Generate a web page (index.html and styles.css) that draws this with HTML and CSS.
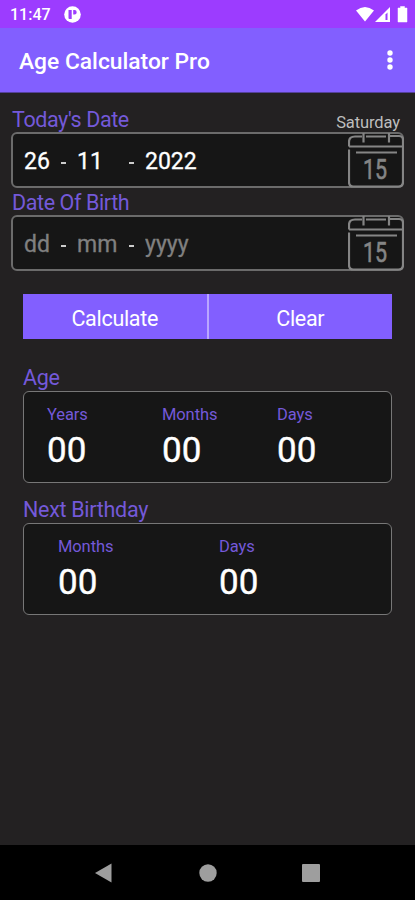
FILE: index.html
```html
<!DOCTYPE html>
<html lang="en">
<head>
  <meta charset="UTF-8">
  <meta name="viewport" content="width=device-width, initial-scale=1.0">
  <title>Age Calculator Pro</title>
  <link rel="stylesheet" href="styles.css">
</head>
<body>
  <!-- Calendar icon, used by both date fields -->
  <svg class="sprite">
    <symbol id="calendar" viewBox="0 0 56 56">
      <path d="M1 17.500v32.500q0 4.500 4.500 4.500h45q4.500 0 4.500-4.500V8q0-4-4-4h-9M1 14.500h54M1 14.500V10q0-5.500 6-5.500h7M18 4.500h20M15.500 1v9.500M41 1v9.500M8 20.500h41" fill="none" stroke="#858585" stroke-width="2.200"/>
      <text x="15" y="47" font-family="Roboto, sans-serif" font-size="27" textLength="24" lengthAdjust="spacingAndGlyphs" fill="#858585" stroke="#858585" stroke-width=".6">15</text>
    </symbol>
  </svg>

  <div class="status-bar">
    <span class="time">11:47</span>
    <svg class="app-icon" width="17" height="17" viewBox="0 0 17 17">
      <circle cx="8.500" cy="8.500" r="8.300" fill="#fff"/>
      <path d="M4.500 4h3.200v9H5.500q-1 0-1-1zM9.200 4h1.300a2.200 2.200 0 0 1 0 4.400H9.200z" fill="#9c3cff"/>
    </svg>
    <svg class="status-icons" width="52" height="17" viewBox="0 0 52 17">
      <path d="M0 4.500Q9 -2.500 18 4.500L9 15.500z" fill="#fff"/>
      <path d="M19 16L34 1v15z" fill="#fff"/>
      <path d="M29.500 8.500l2-2v7.500h-2z" fill="#9c3cff"/>
      <path d="M42 2h2.500V.5h4V2H51v14H42z" fill="#fff" stroke="#fff" stroke-width=".5" stroke-linejoin="round"/>
    </svg>
  </div>

  <header class="app-bar">
    <h1>Age Calculator Pro</h1>
    <button type="button" class="menu-button" aria-label="Menu">
      <svg width="6" height="20" viewBox="0 0 6 20" fill="#fff">
        <circle cx="3" cy="3" r="2.700"/>
        <circle cx="3" cy="10" r="2.700"/>
        <circle cx="3" cy="17" r="2.700"/>
      </svg>
    </button>
  </header>

  <main>
    <form id="ageForm">
      <div class="label-row">
        <label for="todayDay">Today's Date</label>
        <span class="weekday">Saturday</span>
      </div>
      <div class="date-field">
        <input type="text" class="day" id="todayDay" value="26">
        <span class="dash"></span>
        <input type="text" class="month" value="11">
        <span class="dash"></span>
        <input type="text" class="year" value="2022">
        <svg class="calendar"><use href="#calendar"/></svg>
      </div>

      <div class="label-row">
        <label for="birthDay">Date Of Birth</label>
      </div>
      <div class="date-field">
        <input type="text" class="day" id="birthDay" placeholder="dd">
        <span class="dash"></span>
        <input type="text" class="month" placeholder="mm">
        <span class="dash"></span>
        <input type="text" class="year" placeholder="yyyy">
        <svg class="calendar"><use href="#calendar"/></svg>
      </div>

      <div class="buttons">
        <button type="button">Calculate</button>
        <button type="reset">Clear</button>
      </div>
    </form>

    <section class="result">
      <h2>Age</h2>
      <div class="result-box age">
        <div><span class="unit">Years</span><span class="number">00</span></div>
        <div><span class="unit">Months</span><span class="number">00</span></div>
        <div><span class="unit">Days</span><span class="number">00</span></div>
      </div>
    </section>

    <section class="result">
      <h2>Next Birthday</h2>
      <div class="result-box birthday">
        <div><span class="unit">Months</span><span class="number">00</span></div>
        <div><span class="unit">Days</span><span class="number">00</span></div>
      </div>
    </section>
  </main>

  <nav class="nav-bar">
    <svg width="20" height="20" viewBox="0 0 20 20"><path d="M1 10L17.500 .5v19z"/></svg>
    <svg width="20" height="20" viewBox="0 0 20 20"><circle cx="10" cy="10" r="8.700"/></svg>
    <svg width="20" height="20" viewBox="0 0 20 20"><rect x="1" y="1" width="18" height="18" rx="1"/></svg>
  </nav>
</body>
</html>
```

FILE: styles.css
```css
* {
  box-sizing: border-box;
}

body {
  margin: 0;
  height: 900px;
  display: flex;
  flex-direction: column;
  overflow: hidden;
  font-family: Roboto, sans-serif;
  background-color: #232122;
  color: #fff;
}

.sprite {
  display: none;
}

.status-bar {
  height: 28px;
  padding: 0 8px 0 10px;
  display: flex;
  align-items: center;
  background-color: #9c3cff;
}

.time {
  font-size: 16px;
  font-weight: 500;
  line-height: 28px;
  padding-top: 2px;
}

.app-icon {
  margin-left: 13px;
}

.status-icons {
  margin-left: auto;
  margin-right: -1px;
}

.app-bar {
  height: 65px;
  padding: 0 20px;
  display: flex;
  align-items: center;
  justify-content: space-between;
  background-color: #825fff;
  border-bottom: 1px solid #54419a;
}

.app-bar h1 {
  margin: 2px 0 0 -1px;
  font-size: 22.8px;
  font-weight: 500;
}

.menu-button {
  display: flex;
  padding: 0;
  margin-right: 2px;
  border: none;
  background: none;
}

main {
  flex: 1;
  padding: 13px 11px 0;
}

/* Date fields */
.label-row {
  height: 26px;
  display: flex;
  justify-content: space-between;
  padding: 0 4px 0 1px;
  font-size: 21.5px;
  letter-spacing: -0.4px;
  line-height: 27px;
  color: #7459d9;
}

.weekday {
  font-size: 16.5px;
  letter-spacing: -0.1px;
  line-height: 33px;
  color: #bdbdbd;
}

.date-field {
  height: 56px;
  margin-bottom: 1px;
  padding-left: 11px;
  display: flex;
  align-items: center;
  border: 2px solid #6b6b6b;
  border-radius: 6px;
  background-color: #161616;
}

.date-field input {
  padding: 2px 0 0;
  border: none;
  outline: none;
  background: none;
  color: #fff;
  font-family: inherit;
  font-size: 23px;
  -webkit-text-stroke: 0.3px;
  height: 30px;
}

.date-field input::placeholder {
  color: #808080;
}

.day {
  width: 37px;
}

.month {
  width: 52px;
}

.year {
  width: 70px;
}

.dash {
  width: 5px;
  height: 2px;
  margin-top: 5px;
  background-color: #ccc;
}

.dash + input {
  margin-left: 11px;
}

.calendar {
  width: 56px;
  height: 56px;
  flex: none;
  margin-left: auto;
  margin-right: -2px;
}

/* Buttons */
.buttons {
  display: flex;
  margin: 23px 12px 0;
  gap: 2px;
  background-color: #b9a6ff;
}

.buttons button {
  flex: 1;
  height: 45px;
  padding: 3px 0 0;
  border: none;
  background-color: #825fff;
  color: #fff;
  font-family: inherit;
  font-size: 21.5px;
  letter-spacing: -0.3px;
}

/* Results */
.result {
  margin: 24px 12px 0;
}

.result + .result {
  margin-top: 12px;
}

.result h2 {
  margin: 0;
  height: 28px;
  font-size: 21.5px;
  font-weight: 400;
  letter-spacing: -0.3px;
  line-height: 29px;
  color: #7459d9;
}

.result-box {
  height: 92px;
  padding-top: 13px;
  display: grid;
  border: 1.5px solid #777;
  border-radius: 6px;
  background-color: #161616;
}

.age {
  grid-template-columns: 115px 115px 1fr;
  padding-left: 23px;
}

.birthday {
  grid-template-columns: 161px 1fr;
  padding-left: 34px;
}

.unit,
.number {
  display: block;
}

.unit {
  font-size: 16.5px;
  letter-spacing: -0.1px;
  line-height: 20px;
  color: #7459d9;
}

.number {
  margin-top: 5px;
  font-size: 35px;
  line-height: 42px;
  -webkit-text-stroke: 0.4px;
}

/* Android navigation */
.nav-bar {
  height: 55px;
  padding: 0 94px;
  display: flex;
  align-items: center;
  justify-content: space-between;
  background-color: #000;
  fill: #9e9e9e;
}
```
